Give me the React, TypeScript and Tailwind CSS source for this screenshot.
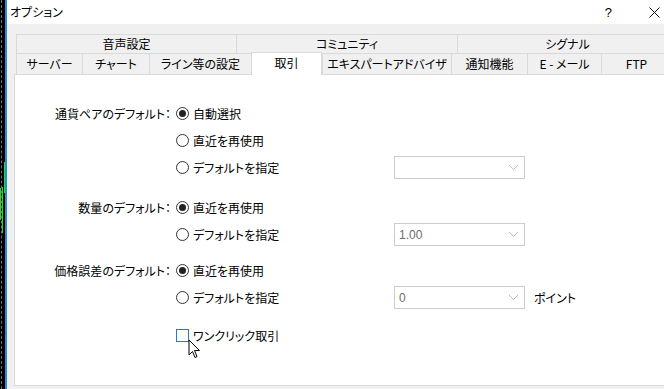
import React from "react";

const font = { fontFamily: '"Noto Sans CJK JP", "Noto Sans", sans-serif' };

function Radio({ checked, label }: { checked?: boolean; label: string }) {
  return (
    <div className="flex items-center">
      <div className="w-[13px] h-[13px] rounded-full border border-[#333333] bg-white flex items-center justify-center">
        {checked && <div className="w-[7px] h-[7px] rounded-full bg-[#222222]" />}
      </div>
      <span className="ml-[4px] text-[12px] text-[#000000] leading-none whitespace-nowrap">{label}</span>
    </div>
  );
}

function Combo({ value }: { value?: string }) {
  return (
    <div className="w-[131px] h-[23px] border border-[#cccccc] bg-white flex items-center justify-between pl-[4px] pr-[5px]">
      <span className="text-[12px] text-[#6d6d6d] leading-none" style={{ fontFamily: '"Liberation Sans", sans-serif' }}>{value}</span>
      <svg width="11" height="7" viewBox="0 0 11 7">
        <path d="M1 1 L5.5 5.5 L10 1" fill="none" stroke="#bdbdbd" strokeWidth="1" />
      </svg>
    </div>
  );
}

function Row({
  label,
  children,
  combo,
  suffix,
  className = "",
}: {
  label?: string;
  children: React.ReactNode;
  combo?: React.ReactNode;
  suffix?: string;
  className?: string;
}) {
  return (
    <div className={"flex h-[27px] items-center " + className}>
      <div className="w-[156px] text-right text-[12px] text-[#000000] leading-none whitespace-nowrap">{label}</div>
      <div className="ml-[5px] w-[218px] flex items-center">{children}</div>
      {combo}
      {suffix && <span className="ml-[9px] text-[12px] leading-none whitespace-nowrap">{suffix}</span>}
    </div>
  );
}

function Tab({ label, w, active }: { label: string; w: number | string; active?: boolean }) {
  return (
    <div
      className={
        "flex items-center justify-center text-[12px] leading-none text-[#000000] border-l border-t border-[#d9d9d9] shrink-0 whitespace-nowrap " +
        (active ? "bg-white h-[23px] self-end -mb-[1px] relative z-10 border-r pb-[2px]" : "bg-[#f0f0f0]")
      }
      style={{ width: w }}
    >
      {label}
    </div>
  );
}

export default function App() {
  return (
    <div
      className="w-[664px] h-[389px] overflow-hidden flex bg-[#f0f0f0] [font-feature-settings:'palt']"
      style={font}
    >
      {/* left chart strip */}
      <div className="w-[5px] h-full bg-black relative shrink-0">
        <div className="absolute left-[1px] top-0 h-full border-l border-dashed border-[#6b6b80]" />
        <svg className="absolute left-0 top-0" width="5" height="389" viewBox="0 0 5 389">
          <line x1="4.5" y1="162" x2="4.5" y2="193" stroke="#22e01e" strokeWidth="1" />
          <line x1="2.5" y1="187" x2="2.5" y2="233" stroke="#22e01e" strokeWidth="1" />
          <line x1="0.5" y1="188" x2="0.5" y2="220" stroke="#22e01e" strokeWidth="1" />
        </svg>
      </div>
      <div className="w-[2px] h-full bg-[#2b8ad6] shrink-0" />
      {/* window */}
      <div className="flex-1 flex flex-col min-w-0">
        <div className="h-[24px] bg-white flex items-center shrink-0">
          <span className="pl-[3px] text-[12px] leading-none">オプション</span>
          <span className="ml-auto text-[13px] leading-none" style={{ fontFamily: '"Liberation Sans", sans-serif' }}>?</span>
          <svg className="ml-[37px] mr-[4px]" width="11" height="11" viewBox="0 0 11 11">
            <path d="M0.5 0.5 L10.5 10.5 M10.5 0.5 L0.5 10.5" stroke="#111" strokeWidth="1" />
          </svg>
        </div>
        <div className="flex-1 flex flex-col pl-[7px] pt-[10px]">
          <div className="ml-[2px] flex h-[19px] shrink-0">
            <Tab label="音声設定" w={220} />
            <Tab label="コミュニティ" w={221} />
            <Tab label="シグナル" w={220} />
          </div>
          <div className="ml-[2px] flex h-[21px] shrink-0">
            <Tab label="サーバー" w={66} />
            <Tab label="チャート" w={67} />
            <Tab label="ライン等の設定" w={102} />
            <Tab label="取引" w={71} active />
            <Tab label="エキスパートアドバイザ" w={129} />
            <Tab label="通知機能" w={76} />
            <Tab label="E - メール" w={74} />
            <Tab label="FTP" w={70} />
          </div>
          <div className="h-[312px] bg-white border border-[#d9d9d9] border-r-0 pt-[25px] relative shrink-0">
            <Row label="通貨ペアのデフォルト：">
              <Radio checked label="自動選択" />
            </Row>
            <Row>
              <Radio label="直近を再使用" />
            </Row>
            <Row combo={<Combo />}>
              <Radio label="デフォルトを指定" />
            </Row>
            <Row label="数量のデフォルト：" className="mt-[13px]">
              <Radio checked label="直近を再使用" />
            </Row>
            <Row combo={<Combo value="1.00" />}>
              <Radio label="デフォルトを指定" />
            </Row>
            <Row label="価格誤差のデフォルト：" className="mt-[9px]">
              <Radio checked label="直近を再使用" />
            </Row>
            <Row combo={<Combo value="0" />} suffix="ポイント">
              <Radio label="デフォルトを指定" />
            </Row>
            <Row className="mt-[11px]">
              <div className="flex items-center">
                <div className="w-[13px] h-[13px] border border-[#1a7fd4] bg-white" />
                <span className="ml-[4px] text-[12px] leading-none whitespace-nowrap">ワンクリック取引</span>
              </div>
            </Row>
            {/* mouse cursor overlay */}
            <svg className="absolute left-[173px] top-[264px]" width="14" height="21" viewBox="0 0 14 21">
              <path
                d="M1 1 L1 16 L4.5 12.5 L7 18.5 L9 17.5 L6.5 11.5 L11.5 11.5 Z"
                fill="#ffffff"
                stroke="#000000"
                strokeWidth="1"
                strokeLinejoin="miter"
              />
            </svg>
          </div>
        </div>
      </div>
    </div>
  );
}
